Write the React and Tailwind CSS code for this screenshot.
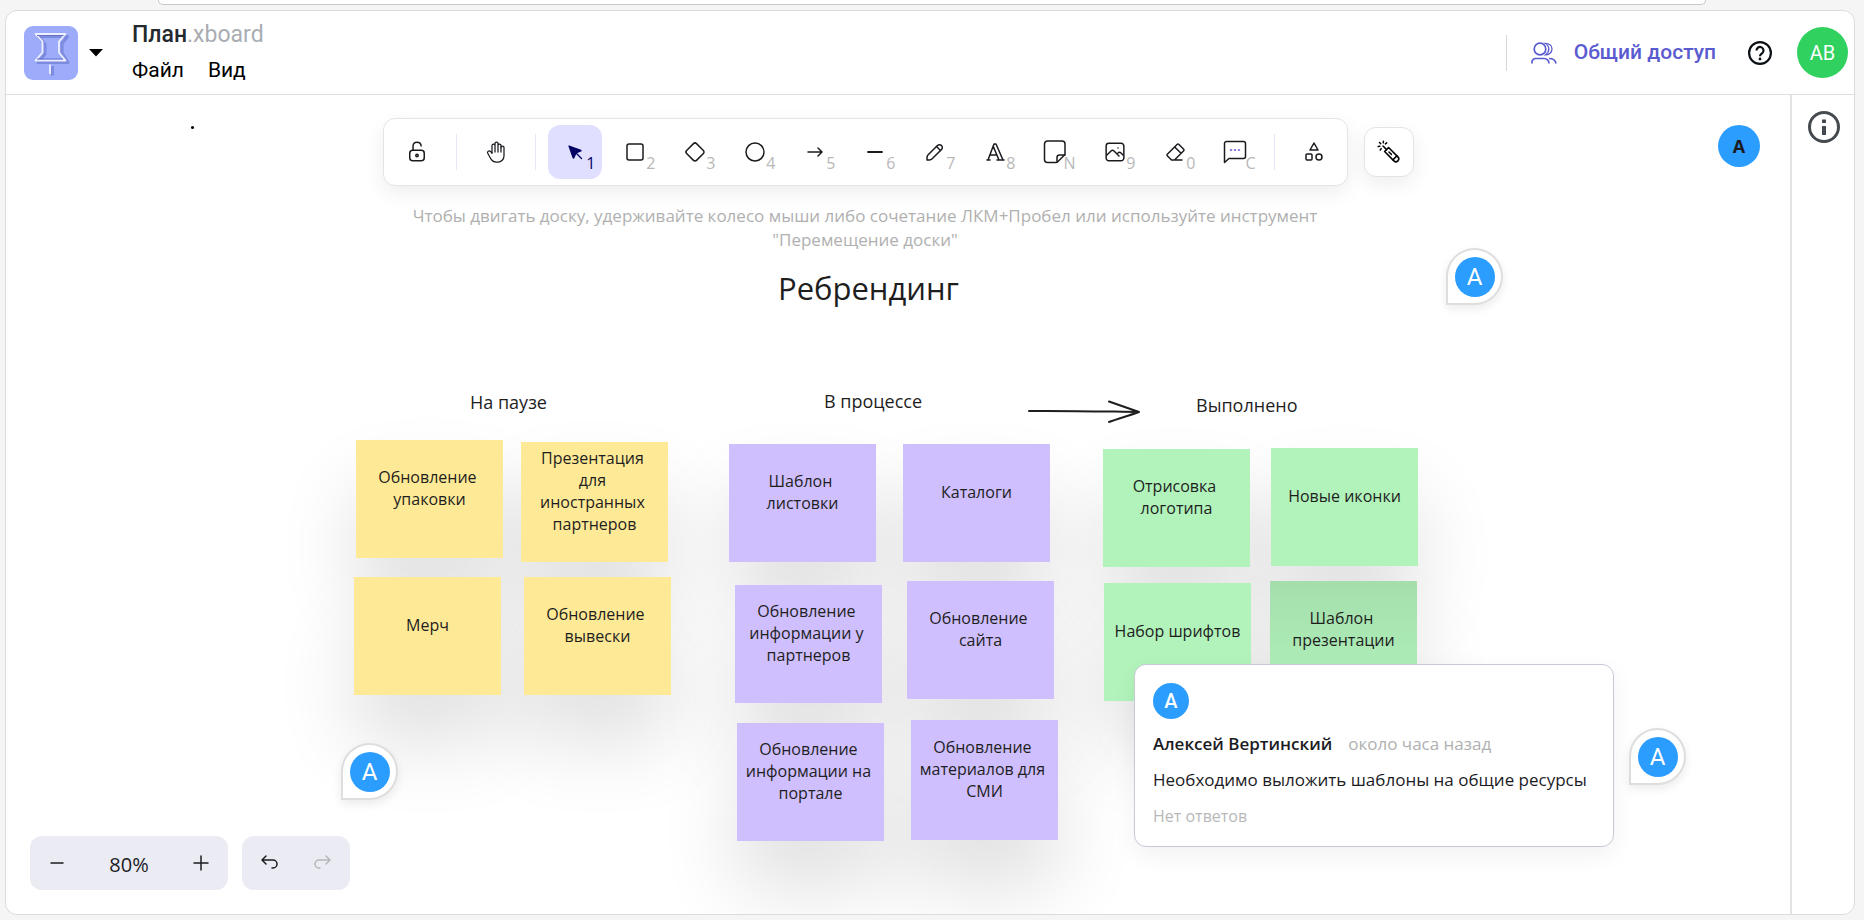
import clsx from 'clsx'

const HAND = "font-['Open_Sans','Noto_Sans',sans-serif]"

// Toolbar icons come in two grids, 20 and 24 units, both drawn at 24px.
function Icon({ grid = 24, width = 1.5, children, className }) {
  return (
    <svg
      viewBox={grid === 20 ? '0 0 20 20' : '0 0 24 24'}
      className={clsx('size-6', className)}
      fill="none"
      stroke="currentColor"
      strokeWidth={grid === 20 ? 1.25 : width}
      strokeLinecap="round"
      strokeLinejoin="round"
      aria-hidden="true"
    >
      {children}
    </svg>
  )
}

const icons = {
  lock: (
    <Icon grid={20}>
      <path d="M13.542 8.542H6.458a2.5 2.5 0 0 0-2.5 2.5v3.75a2.5 2.5 0 0 0 2.5 2.5h7.084a2.5 2.5 0 0 0 2.5-2.5v-3.75a2.5 2.5 0 0 0-2.5-2.5Z" />
      <circle cx="10" cy="12.9" r="1" />
      <path d="M6.7 8.4V5.2c0-1.9 1.4-3.3 3.3-3.3s3.3 1.3 3.5 3" />
    </Icon>
  ),
  hand: (
    <Icon width={1.25}>
      <path d="M8 13v-7.5a1.5 1.5 0 0 1 3 0v6.5M11 5.5v-2a1.5 1.5 0 1 1 3 0v8.5M14 5.5a1.5 1.5 0 0 1 3 0v6.5" />
      <path d="M17 7.5a1.5 1.5 0 0 1 3 0v8.5a6 6 0 0 1-6 6h-2h.208a6 6 0 0 1-5.012-2.7a69.74 69.74 0 0 1-.196-.3c-.312-.479-1.407-2.388-3.286-5.728a1.5 1.5 0 0 1 .536-2.022a1.867 1.867 0 0 1 2.28.28l1.47 1.47" />
    </Icon>
  ),
  select: (
    <Icon width={1.25}>
      <path
        fill="currentColor"
        d="M6 6l4.153 11.793a.365.365 0 0 0 .331.207.366.366 0 0 0 .332-.207L13 13l4.787-1.994c.132-.063.213-.204.207-.355a.4.4 0 0 0-.207-.334L6 6Z"
      />
      <path d="m13.5 13.5 5 5" />
    </Icon>
  ),
  rectangle: (
    <Icon>
      <rect x="4" y="4" width="16" height="16" rx="2" />
    </Icon>
  ),
  diamond: (
    <Icon>
      <path d="M10.5 20.4l-6.9-6.9c-.781-.781-.781-2.219 0-3l6.9-6.9c.781-.781 2.219-.781 3 0l6.9 6.9c.781.781.781 2.219 0 3l-6.9 6.9c-.781.781-2.219.781-3 0z" />
    </Icon>
  ),
  ellipse: (
    <Icon>
      <circle cx="12" cy="12" r="9" />
    </Icon>
  ),
  arrow: (
    <Icon>
      <path d="M5 12h14M15 16l4-4M15 8l4 4" />
    </Icon>
  ),
  line: (
    <Icon grid={20}>
      <path d="M4.167 10h11.666" strokeWidth="1.5" />
    </Icon>
  ),
  pencil: (
    <Icon grid={20}>
      <path d="m7.643 15.69 7.774-7.773a2.357 2.357 0 1 0-3.334-3.334L4.31 12.357a3.333 3.333 0 0 0-.977 2.357v1.953h1.953c.884 0 1.732-.352 2.357-.977Z" />
      <path d="m11.25 5.417 3.333 3.333" />
    </Icon>
  ),
  text: (
    <Icon>
      <path d="M4 20h3M14 20h7M6.9 15h6.9M10.2 6.3l5.8 13.7M5 20l6-16h2l7 16" />
    </Icon>
  ),
  note: (
    <Icon>
      <path d="M13 22.5H4.5a3 3 0 0 1-3-3V4a3 3 0 0 1 3-3H19a3 3 0 0 1 3 3v10.5l-7.5 7.5c-.4.3-.9.5-1.5.5Z" />
      <path d="M14 22v-4.5a2.500 2.500 0 0 1 2.500-2.500H22" />
    </Icon>
  ),
  image: (
    <Icon grid={20}>
      <path d="M12.5 6.667h.01M4.91 2.625h10.18a2.284 2.284 0 0 1 2.285 2.284v10.182a2.284 2.284 0 0 1-2.284 2.284H4.909a2.284 2.284 0 0 1-2.284-2.284V4.909a2.284 2.284 0 0 1 2.284-2.284Z" />
      <path d="m3.333 12.5 3.334-3.333c.773-.745 1.726-.745 2.5 0l4.166 4.166M11.667 11.667l.833-.834c.774-.744 1.726-.744 2.5 0l1.667 1.667" />
    </Icon>
  ),
  eraser: (
    <Icon>
      <path d="M19 20h-10.5l-4.21-4.3a1 1 0 0 1 0-1.41l10-10a1 1 0 0 1 1.41 0l5 5a1 1 0 0 1 0 1.41l-9.2 9.3M18 13.3l-6.3-6.3" />
    </Icon>
  ),
  comment: (
    <Icon>
      <path d="M1.5 3.500a2 2 0 0 1 2-2h17a2 2 0 0 1 2 2v13a2 2 0 0 1-2 2H6l-4.500 4Z" />
      <path d="M7.5 10h1M11.5 10h1M15.5 10h1" stroke="#5b4fd6" />
    </Icon>
  ),
  shapes: (
    <Icon>
      <path d="M12 3l-4 7h8z" />
      <circle cx="17" cy="17" r="3" />
      <rect x="4" y="14" width="6" height="6" rx="1" />
    </Icon>
  ),
}

const tools = [
  { id: 'rectangle', key: '2', label: 'Прямоугольник' },
  { id: 'diamond', key: '3', label: 'Ромб' },
  { id: 'ellipse', key: '4', label: 'Эллипс' },
  { id: 'arrow', key: '5', label: 'Стрелка' },
  { id: 'line', key: '6', label: 'Линия' },
  { id: 'pencil', key: '7', label: 'Карандаш' },
  { id: 'text', key: '8', label: 'Текст' },
  { id: 'note', key: 'N', label: 'Стикер' },
  { id: 'image', key: '9', label: 'Изображение' },
  { id: 'eraser', key: '0', label: 'Ластик' },
  { id: 'comment', key: 'C', label: 'Комментарий' },
]

function Tool({ id, hotkey, label, active }) {
  return (
    <button
      type="button"
      aria-label={label}
      className={clsx(
        'relative flex size-[54px] items-center justify-center rounded-xl',
        active ? 'bg-[#e0dfff] text-[#030064]' : 'text-[#1b1b1f]',
      )}
    >
      {icons[id]}
      {hotkey && (
        <span className={clsx('absolute right-1.5 bottom-2 text-base leading-4', !active && 'text-[#b8b8b8]')}>
          {hotkey}
        </span>
      )}
    </button>
  )
}

function Divider() {
  return <span className="mx-1.5 h-9 w-px bg-[#e9e8fb]" />
}

const noteColors = {
  yellow: 'bg-[#feea96]',
  purple: 'bg-[#cfbfff]',
  green: 'bg-[#b1f3bb]',
  shaded: 'bg-linear-to-b from-[#a4deac] to-[#b1f3bb]',
}

// Places are in canvas coordinates.
const notes = [
  { color: 'yellow', place: 'left-[350px] top-[345px] h-[118px]', text: 'Обновление \nупаковки' },
  { color: 'yellow', place: 'left-[515px] top-[347px] h-[120px]', text: 'Презентация \nдля \nиностранных \nпартнеров' },
  { color: 'yellow', place: 'left-[348px] top-[482px] h-[118px]', text: 'Мерч' },
  { color: 'yellow', place: 'left-[518px] top-[482px] h-[118px]', text: 'Обновление \nвывески' },
  { color: 'purple', place: 'left-[723px] top-[349px] h-[118px]', text: 'Шаблон \nлистовки' },
  { color: 'purple', place: 'left-[897px] top-[349px] h-[118px]', text: 'Каталоги' },
  { color: 'purple', place: 'left-[729px] top-[490px] h-[118px]', text: 'Обновление \nинформации у \nпартнеров' },
  { color: 'purple', place: 'left-[901px] top-[486px] h-[118px]', text: 'Обновление \nсайта' },
  { color: 'purple', place: 'left-[731px] top-[628px] h-[118px]', text: 'Обновление \nинформации на \nпортале' },
  { color: 'purple', place: 'left-[905px] top-[625px] h-[120px]', text: 'Обновление \nматериалов для \nСМИ' },
  { color: 'green', place: 'left-[1097px] top-[354px] h-[118px]', text: 'Отрисовка \nлоготипа' },
  { color: 'green', place: 'left-[1265px] top-[353px] h-[118px]', text: 'Новые иконки' },
  { color: 'green', place: 'left-[1098px] top-[488px] h-[118px]', text: 'Набор шрифтов' },
  { color: 'shaded', place: 'left-[1264px] top-[486px] h-[118px]', text: 'Шаблон \nпрезентации' },
]

const pins = ['left-[1440px] top-[153px]', 'left-[335px] top-[648px]', 'left-[1623px] top-[633px]']

function Board() {
  return (
    <div className={clsx('absolute inset-0 overflow-hidden text-[#1e1e1e]', HAND)}>
      <span className="absolute top-[31px] left-[185px] size-[3px] rounded-full bg-black" />
      <h1 className="absolute top-[171px] left-[772px] text-[31px] leading-[45px] whitespace-nowrap">Ребрендинг</h1>

      {/* soft shadows stay under every note */}
      {notes.map((n) => (
        <div key={n.place} className={clsx('absolute w-[147px] shadow-[0_48px_80px_rgba(0,0,0,0.12)]', n.place)} />
      ))}
      {notes.map((n) => (
        <div
          key={n.place}
          className={clsx(
            'absolute flex w-[147px] items-center justify-center pb-[22px] text-center text-base leading-[22px] whitespace-pre',
            noteColors[n.color],
            n.place,
          )}
        >
          {n.text}
        </div>
      ))}

      <h2 className="absolute top-[293px] left-[464px] text-lg leading-7 whitespace-nowrap">На паузе</h2>
      <h2 className="absolute top-[292px] left-[818px] text-lg leading-7 whitespace-nowrap">В процессе</h2>
      <h2 className="absolute top-[296px] left-[1190px] text-lg leading-7 whitespace-nowrap">Выполнено</h2>

      <svg
        className="absolute top-[301px] left-[1020px] h-7 w-[120px]"
        viewBox="0 0 120 28"
        fill="none"
        stroke="currentColor"
        strokeWidth="2"
        strokeLinecap="round"
        aria-hidden="true"
      >
        <path d="M3 15c35-.5 75 .5 110 1M83 5.500c10 3.500 20 7 30 10.500M83 26c10-3.500 20-6.500 30-10" />
      </svg>

      {pins.map((place) => (
        <button
          key={place}
          type="button"
          aria-label="Комментарий"
          className={clsx(
            'absolute flex size-[57px] items-center justify-center rounded-full rounded-bl-[2px] border-2 border-[#dedede] bg-white shadow-[0_4px_10px_rgba(0,0,0,0.08)]',
            place,
          )}
        >
          <span className="flex size-10 items-center justify-center rounded-full bg-[#2b9dff] font-[Roboto,sans-serif] text-2xl text-white">
            A
          </span>
        </button>
      ))}
    </div>
  )
}

function CommentCard() {
  return (
    <article className="absolute top-[569px] left-[1128px] flex w-[480px] flex-col rounded-xl border border-[#c5cad6] bg-white p-[18px] text-[17px] leading-6 text-[#1b1b1f] shadow-[0_8px_24px_rgba(0,0,0,0.06)]">
      <span className="flex size-9 items-center justify-center rounded-full bg-[#2b9dff] font-[Roboto,sans-serif] text-xl font-medium text-white">
        A
      </span>
      <p className="mt-[13px] flex gap-4 whitespace-nowrap">
        <b className="font-semibold">Алексей Вертинский</b>
        <time className="text-[#b0b0b0]">около часа назад</time>
      </p>
      <p className="mt-3 whitespace-nowrap">Необходимо выложить шаблоны на общие ресурсы</p>
      <p className="mt-3 text-base leading-6 text-[#b8b8b8]">Нет ответов</p>
    </article>
  )
}

function Header() {
  return (
    <header className="flex h-[84px] items-center border-b border-[#e0e0e0] pr-1.5 pl-[18px] font-[Roboto,sans-serif]">
      <svg viewBox="0 0 54 54" className="size-[54px]" fill="none" aria-hidden="true">
        <rect width="54" height="54" rx="9" fill="#9dabfb" />
        <g strokeWidth="2" strokeLinejoin="round">
          <path
            d="M14 10.500h29.500l-5.500 7v9.500l6 9.500H14l7-8.500v-10Z M28.500 40v9.500"
            stroke="#5b6ac4"
            strokeWidth="3"
            opacity=".5"
          />
          <path d="M11.500 8h30l-6.500 7.500v11l6.500 8h-30l7-8v-11Z M26 38.500v9.500" stroke="#eef0ff" strokeWidth="1.800" />
          <path d="M13 9.500h26.500M13 33h26" stroke="#6573cf" strokeWidth="1" />
        </g>
      </svg>
      <button type="button" aria-label="Меню приложений" className="ml-[11px]">
        <svg viewBox="0 0 14 8" className="h-2 w-3.5" aria-hidden="true">
          <path d="M0 0h14L7 7.500Z" />
        </svg>
      </button>
      <div className="ml-[29px] flex flex-col gap-[11px]">
        <div className="text-[23px] leading-6 font-medium text-[#24292f]">
          План<span className="font-normal text-[#a9adb1]">.xboard</span>
        </div>
        <nav className="flex gap-6 text-[21px] leading-6">
          <button type="button">Файл</button>
          <button type="button">Вид</button>
        </nav>
      </div>

      <div className="ml-auto flex items-center">
        <span className="h-9 w-px bg-[#d6d6d6]" />
        <button type="button" className="ml-6 flex items-center gap-[17px] text-[21px] font-medium text-[#5b5bd0]">
          <svg
            viewBox="0 0 26 22"
            className="h-[22px] w-[26px]"
            fill="none"
            stroke="currentColor"
            strokeWidth="1.7"
            aria-hidden="true"
          >
            <circle cx="9" cy="7" r="5.800" />
            <path d="M14 1.300c4 0 7 2.300 7 5.700s-3 5.900-6.500 5.900c2.200-1.500 3.300-3.500 3.300-5.900S16.500 2.700 14 1.300Z" strokeWidth="1.300" />
            <path d="M1 21.500V20a3.500 3.500 0 0 1 3.500-3.500H13a5 5 0 0 1 5 5M18 16.500c4 0 6.500 1.800 7 5" />
          </svg>
          Общий доступ
        </button>
        <button type="button" aria-label="Справка" className="ml-8">
          <svg viewBox="0 0 24 24" className="size-6" fill="none" stroke="#0b1016" strokeWidth="2.200" aria-hidden="true">
            <circle cx="12" cy="12" r="10.900" />
            <path d="M8.500 9.500a3.500 3.500 0 1 1 5.600 2.800c-1.200.9-2.100 1.500-2.100 3" />
            <circle cx="12" cy="18" r="1.400" fill="#0b1016" stroke="none" />
          </svg>
        </button>
        <button
          type="button"
          className="ml-[25px] flex size-[51px] items-center justify-center rounded-full bg-[#30d15f] text-xl text-white"
        >
          АВ
        </button>
      </div>
    </header>
  )
}

export default function App() {
  return (
    <div className="flex min-h-screen flex-col bg-[#f5f5f5] px-[5px] pb-[5px] font-['Open_Sans','Noto_Sans',sans-serif]">
      <div className="mx-[153px] mb-[5px] h-[5px] rounded-b-2xl border border-t-0 border-[#c8c8c8] bg-white" />

      <div className="mr-1 flex flex-1 flex-col overflow-hidden rounded-xl border border-[#dcdcdc] bg-white">
        <Header />

        <div className="flex flex-1">
          <main className="relative flex min-w-0 flex-1 flex-col justify-between">
            <Board />

            <div className="relative mt-[23px] flex items-start justify-center gap-4">
              <div className="flex flex-col items-center gap-[18px]">
                <div
                  role="toolbar"
                  className="flex items-center gap-1.5 rounded-xl border border-[#e4e4e4] bg-white p-1.5 shadow-[0_7px_20px_rgba(0,0,0,0.07)]"
                >
                  <Tool id="lock" label="Закрепить инструмент" />
                  <Divider />
                  <Tool id="hand" label="Перемещение доски" />
                  <Divider />
                  <Tool id="select" hotkey="1" label="Выделение" active />
                  {tools.map((t) => (
                    <Tool key={t.id} id={t.id} hotkey={t.key} label={t.label} />
                  ))}
                  <Divider />
                  <Tool id="shapes" label="Другие инструменты" />
                </div>
                <p className="text-center text-[17px] leading-6 text-[#b0b0b0]">
                  Чтобы двигать доску, удерживайте колесо мыши либо сочетание ЛКМ+Пробел или используйте инструмент
                  <br />
                  "Перемещение доски"
                </p>
              </div>
              <button
                type="button"
                aria-label="Лазерная указка"
                className="mt-[9px] flex size-[50px] items-center justify-center rounded-xl border border-[#e4e4e4] bg-white shadow-[0_7px_20px_rgba(0,0,0,0.07)]"
              >
                <Icon grid={20}>
                  <g transform="rotate(90 10 10)">
                    <path d="m9.644 13.69 7.774-7.773a2.357 2.357 0 0 0-3.334-3.334l-7.773 7.774L8 12l1.643 1.69Z" />
                    <path d="m13.25 3.417 3.333 3.333M10 10l2-2M5 15l3-3M2.156 17.894l1-1M5.453 19.029l-.144-1.407M2.377 11.887l.866 1.118M8.354 17.273l-1.194-.758M.953 14.652l1.408.13" />
                  </g>
                </Icon>
              </button>
            </div>

            <span className="absolute top-[30px] right-[30px] flex size-[42px] items-center justify-center rounded-full bg-[#2b9dff] text-lg font-bold text-[#1b1b1f]">
              A
            </span>

            <CommentCard />

            <div className="relative mb-6 ml-6 flex gap-3.5 self-start">
              <div className="flex h-[54px] items-center rounded-xl bg-[#ebebf3] text-[#1b1b1f]">
                <button type="button" aria-label="Уменьшить" className="flex size-[54px] items-center justify-center">
                  <Icon grid={20}>
                    <path d="M5 10h10" />
                  </Icon>
                </button>
                <button type="button" className="w-[90px] pt-1 text-center text-xl">
                  80%
                </button>
                <button type="button" aria-label="Увеличить" className="flex size-[54px] items-center justify-center">
                  <Icon grid={20}>
                    <path d="M10 4.167v11.666M4.167 10h11.666" />
                  </Icon>
                </button>
              </div>
              <div className="flex h-[54px] items-center rounded-xl bg-[#ebebf3] text-[#1b1b1f]">
                <button type="button" aria-label="Отменить" className="flex size-[54px] items-center justify-center">
                  <Icon grid={20}>
                    <path d="M7.5 10.833 4.167 7.5 7.5 4.167M4.167 7.5h9.166a3.333 3.333 0 0 1 0 6.667H12.5" />
                  </Icon>
                </button>
                <button
                  type="button"
                  disabled
                  aria-label="Повторить"
                  className="flex size-[54px] items-center justify-center text-[#b5b5ba]"
                >
                  <Icon grid={20}>
                    <path d="M12.5 10.833 15.833 7.5 12.5 4.167M15.833 7.5H6.667a3.333 3.333 0 1 0 0 6.667H7.5" />
                  </Icon>
                </button>
              </div>
            </div>
          </main>

          <aside className="w-16 border-l-2 border-[#e2e2e2]">
            <button type="button" aria-label="Информация" className="mt-4 ml-4 block">
              <svg viewBox="0 0 32 32" className="size-8" fill="none" stroke="#454a50" strokeWidth="3" aria-hidden="true">
                <circle cx="16" cy="16" r="14.500" />
                <path d="M16 15v9M16 8.500v3.500" strokeWidth="4" />
              </svg>
            </button>
          </aside>
        </div>
      </div>
    </div>
  )
}
